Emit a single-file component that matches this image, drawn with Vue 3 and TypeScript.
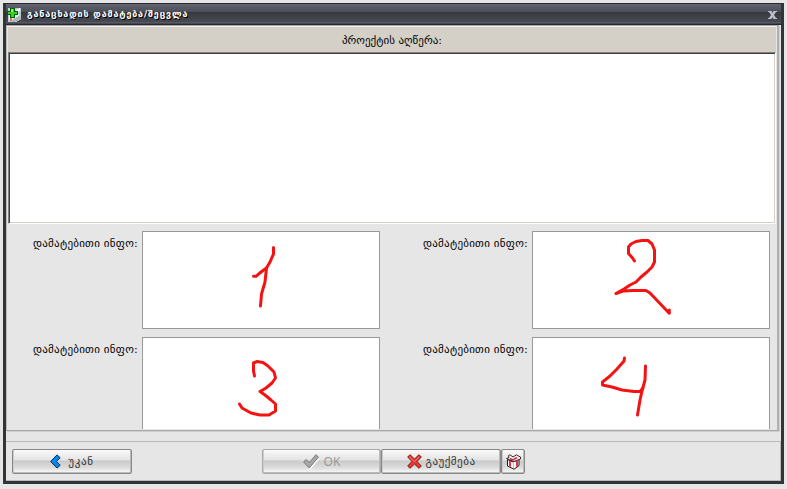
<script setup lang="ts">
interface InfoField {
  id: number
  strokes: string[]
}

const title = 'განაცხადის დამატება/შეცვლა'
const heading = 'პროექტის აღწერა:'
const infoLabel = 'დამატებითი ინფო:'

// Each field shows a freehand drawing in a 236x96 canvas.
const fields: InfoField[] = [
  { id: 1, strokes: ['M130.500 15.500V22L127 30L123.500 36L118 40L113 44.300H110.500', 'M123.500 36L122 50L118.500 62L117.500 74'] },
  { id: 2, strokes: ['M101.500 29L99.500 26L95.500 21.500V15L98 12L103 9.500L109 8.500H115L119 12L121.500 18V30L119 35L114 40L108 45L103 50L97 53L91 57L83 61.500M83 61.500L90 59L101 58.500H113L117 61L136 81', 'M136.300 78V81'] },
  { id: 3, strokes: ['M111.500 38L110.500 33V25L114 23.500L120 24.500L125 28L131 34L132.500 40L129 45L123 50L117 53.500L122 57L128 62L132.500 66V73L126 77H117L108 75L99 70L96.500 66'] },
  { id: 4, strokes: ['M91.500 20L91 23L84 31L77 38L69.500 44V47L79 49L89 52L101 53.500H107L110 50', 'M112.500 28L112 42L109 53L107 62L104.500 77'] },
]
</script>

<template>
  <main class="desktop">
    <section class="window">
      <header class="titlebar">
        <svg class="title-icon" width="15" height="16" viewBox="0 0 15 16" shape-rendering="crispEdges">
          <path d="M1 1H14V10L10 15H1Z" fill="#b9cdd2" />
          <path d="M2 7H12V13H2Z" fill="#e9eeee" />
          <path d="M9 3L13 1V3L10 8Z" fill="#fff" />
          <path d="M3 14L12 9L14 10V13L6 15Z" fill="#aeb5b8" />
          <path d="M3 11H5V14H3Z" fill="#e07868" />
          <path d="M3 1H8V4H11V8H8V11H3V8H0V4H3Z" fill="#075d05" />
          <path d="M4 2H7V5H10V7H7V10H4V7H1V5H4Z" fill="#35d31c" />
          <path d="M4 2H6V5H4Z" fill="#8af276" />
        </svg>
        <h1 class="title">{{ title }}</h1>
        <svg class="close" width="9" height="8" viewBox="0 0 9 8">
          <path d="M0 0H3.500L4.500 2L5.500 0H9V1H8L6 4L8 7H9V8H5.500L4.500 6L3.500 8H0V7H1L3 4L1 1H0Z" fill="#b6bfcb" />
        </svg>
      </header>

      <div class="body">
        <div class="panel">
          <div class="heading"><span>{{ heading }}</span></div>
          <div class="description"></div>
          <div class="fields">
            <div v-for="field in fields" :key="field.id" class="field">
              <span class="label">{{ infoLabel }}</span>
              <div class="box">
                <svg width="236" height="96" viewBox="0 0 236 96">
                  <path v-for="stroke in field.strokes" :key="stroke" :d="stroke" />
                </svg>
              </div>
            </div>
          </div>
        </div>

        <footer class="actions">
          <button class="button back" type="button">
            <svg width="11" height="15" viewBox="0 0 11 15">
              <path d="M0.700 7.500L7 0.900L10.200 3.800L6.500 7.500L10.200 11.200L7 14.100Z" fill="#0788ed" stroke="#032c58" />
            </svg>
            <span>უკან</span>
          </button>
          <div class="group">
            <button class="button ok" type="button" disabled>
              <svg width="17" height="16" viewBox="0 0 17 16">
                <path d="M1.500 9L3.500 7L7 10L13.500 2L16.500 5L7 15.500Z" fill="#fff" />
                <path d="M0.600 8L3.200 5.500L6.200 8.700L13 0.700L15.500 3.200L6.200 14Z" fill="#a7a7a7" stroke="#777" />
              </svg>
              <span>OK</span>
            </button>
            <button class="button cancel" type="button">
              <svg width="15" height="15" viewBox="0 0 15 15">
                <path d="M0.700 3L3 0.700L7.500 5L12 0.700L14.300 3L10 7.500L14.300 12L12 14.300L7.500 10L3 14.300L0.700 12L5 7.500Z" fill="#ee352f" stroke="#751713" />
                <path d="M2.500 3L7.500 7.500L12 3" fill="none" stroke="#ff8275" />
              </svg>
              <span>გაუქმება</span>
            </button>
            <button class="button gift" type="button" aria-label="gift">
              <svg width="15" height="16" viewBox="0 0 15 16">
                <path d="M1.500 5.500L7 8L13 5.500V11.500L8 15.200L1.500 12Z" fill="#fff" stroke="#251718" />
                <path d="M0.500 4.500L3 3.500L2.500 1.500L4 0.800L7 3L10.500 0.800L12.500 2L14.500 3V5L8 7.500Z" fill="#f7f3f4" stroke="#3a2426" />
                <path d="M3 6.500L5 7.500V13L3 12ZM10 7L12 6V11.500L10 13Z" fill="#e62f49" />
                <path d="M4 4.500L7 6L11 3.500" fill="none" stroke="#d5304a" stroke-width="1.500" />
                <path d="M7.500 8V14" fill="none" stroke="#c9b9bc" />
              </svg>
            </button>
          </div>
        </footer>
      </div>
    </section>
  </main>
</template>

<style>
body {
  background: #e6e6e6;
}
</style>

<style scoped>
* {
  box-sizing: border-box;
}
.desktop {
  width: 787px;
  height: 489px;
  padding: 3px;
  background: #e6e6e6;
  font: 11px "DejaVu Sans", sans-serif;
  color: #000;
}
.window {
  width: 781px;
  height: 481px;
  display: flex;
  flex-direction: column;
  border: solid #252a30;
  border-width: 1px 3px 3px;
  border-color: #252930 #30353a #30353a;
}
.titlebar {
  height: 21px;
  flex: none;
  display: flex;
  align-items: center;
  padding: 0 4px 0 1px;
  background: linear-gradient(#62656f 0, #4b4e59 8px, #37383d 8px, #484a52 18px, #656978 19px, #24262c 20px);
}
.title-icon {
  flex: none;
}
.title {
  margin: -1px 0 0 5px;
  font-size: 9px;
  line-height: 16px;
  font-weight: bold;
  letter-spacing: 0.83px;
  color: #fff;
  text-shadow: 1px 1px #000;
  white-space: nowrap;
}
.close {
  margin-left: auto;
}
.body {
  flex: 1;
  min-height: 0;
  display: flex;
  flex-direction: column;
  background: #e6e6e6;
}
.panel {
  width: 773px;
  height: 406px;
  flex: none;
  display: flex;
  flex-direction: column;
  overflow: hidden;
  border: solid #aaa;
  border-width: 1px 2px 1px 1px;
  border-color: #aaa #b1b1b1 #a8a8a8 #bcbcbc;
  box-shadow: 1px 1px #cfcfcf;
}
.heading {
  height: 26px;
  flex: none;
  display: flex;
  align-items: center;
  justify-content: center;
  margin: 0 1px;
  padding-top: 2px;
  border-top: 1px solid #f3f1ed;
  background: #d4d0c8;
}
.heading span {
  white-space: nowrap;
}
.description {
  height: 172px;
  flex: none;
  margin: 0 1px;
  background: #fff;
  border: 1px solid #808080;
  border-right-color: #fff;
  border-bottom-color: #fff;
  box-shadow: inset 1px 1px #404040, inset -1px -1px #d4d0c8;
}
.fields {
  display: grid;
  grid-template-columns: 390px 380px;
  grid-auto-rows: 98px;
  gap: 8px 0;
  margin-top: 7px;
  height: 198px;
  overflow: hidden;
}
.field {
  display: flex;
}
.label {
  width: 135px;
  flex: none;
  padding: 5px 4px 0 0;
  text-align: right;
  white-space: nowrap;
  line-height: 15px;
  letter-spacing: 0.25px;
}
.box {
  width: 238px;
  height: 98px;
  background: #fff;
  border: 1px solid #999;
}
.box svg {
  display: block;
}
.box path {
  fill: none;
  stroke: #f31313;
  stroke-width: 3;
  stroke-linecap: round;
  stroke-linejoin: round;
}
.actions {
  width: 775px;
  height: 40px;
  flex: none;
  margin-top: 10px;
  display: flex;
  padding: 7px 6px;
  border: solid #b9b9b9;
  border-width: 1px 1px 1px 0;
}
.group {
  display: flex;
  margin-left: 130px;
}
.button {
  height: 25px;
  display: flex;
  align-items: center;
  justify-content: center;
  gap: 7px;
  padding: 0;
  border: 1px solid #888;
  border-radius: 2px;
  background: linear-gradient(#fafafa 0, #e3e3e3 10px, #cacaca 11px, #dadada 17px, #fafafa 100%);
  box-shadow: inset 1px 0 #ccc, inset -1px 0 #bbb, inset 0 -1px #bbb;
  font: 11px "DejaVu Sans", sans-serif;
  color: #333;
  white-space: nowrap;
}
.back,
.cancel {
  width: 120px;
}
.back {
  letter-spacing: 0.7px;
}
.ok {
  width: 119px;
  border-color: #aaa;
  color: #999;
}
.ok {
  gap: 4px;
}
.ok span {
  font-family: "Noto Sans", sans-serif;
  font-size: 12px;
}
.cancel {
  gap: 4px;
  letter-spacing: 0.5px;
}
.gift {
  width: 24px;
}
</style>
